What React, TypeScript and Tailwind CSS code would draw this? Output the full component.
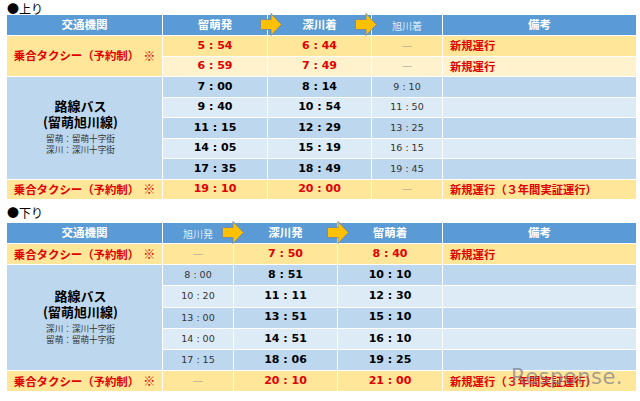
import React from 'react'

const hdr = 'bg-[#5b9bd5] flex items-center justify-center text-white font-bold text-[11.5px]'
const hdrLight = 'bg-[#5b9bd5] flex items-center justify-center text-[#e3ecf6] text-[10px]'
const num = "font-['DejaVu_Sans',sans-serif]"
const red = 'text-[#e00000]'

const Arrow = ({ left }: { left: number }) => (
  <svg
    className="absolute top-[-2px] w-[22px] h-[23px]"
    style={{ left }}
    viewBox="0 0 22 23"
  >
    <path
      d="M0.5 6.5 H11 V0.5 L21.5 11.5 L11 22.5 V16.5 H0.5 Z"
      fill="#ffc000"
      stroke="#7d8c9c"
      strokeWidth="1"
    />
  </svg>
)

const TaxiLabel = ({ span }: { span: string }) => (
  <div className={`${span} bg-[#ffe699] flex items-center justify-center ${red} font-bold text-[11.4px]`}>
    乗合タクシー（予約制）<span className="ml-[4px] text-[12px]">※</span>
  </div>
)

const BusLabel = ({ lines }: { lines: string[] }) => (
  <div className="row-span-5 bg-[#bdd7ee] flex flex-col items-center justify-center pr-[8px] pb-[2px] text-center">
    <div className="font-bold text-[13px] leading-[16px]">
      路線バス
      <br />
      (留萌旭川線)
    </div>
    <div className="mt-[3px] text-[8.6px] leading-[11px] text-[#333]">
      {lines[0]}
      <br />
      {lines[1]}
    </div>
  </div>
)

const up = [
  ['7 : 00', '8 : 14', '9 : 10'],
  ['9 : 40', '10 : 54', '11 : 50'],
  ['11 : 15', '12 : 29', '13 : 25'],
  ['14 : 05', '15 : 19', '16 : 15'],
  ['17 : 35', '18 : 49', '19 : 45'],
]

const down = [
  ['8 : 00', '8 : 51', '10 : 10'],
  ['10 : 20', '11 : 11', '12 : 30'],
  ['13 : 00', '13 : 51', '15 : 10'],
  ['14 : 00', '14 : 51', '16 : 10'],
  ['17 : 15', '18 : 06', '19 : 25'],
]

const busBg = (i: number) => (i % 2 === 0 ? 'bg-[#bdd7ee]' : 'bg-[#ddebf7]')
const cell = 'flex items-center justify-center'

export default function App() {
  return (
    <div className="w-[640px] h-[401px] overflow-hidden relative bg-white px-[7px] font-['Noto_Sans_CJK_JP',sans-serif] text-black">
      <div className="h-[15px] flex items-center text-[12px] leading-none pt-[2px]">●上り</div>
      <div className="relative">
        <div className="grid grid-cols-[155px_104px_103px_70px_193px] grid-rows-[20px_repeat(8,19.5px)] gap-px">
          <div className={hdr}>交通機関</div>
          <div className={hdr}>留萌発</div>
          <div className={hdr}>深川着</div>
          <div className={hdrLight}>旭川着</div>
          <div className={hdr}>備考</div>

          <TaxiLabel span="row-span-2" />
          {[
            ['5 : 54', '6 : 44'],
            ['6 : 59', '7 : 49'],
          ].map(([a, b], i) => {
            const bg = i === 0 ? 'bg-[#ffe699]' : 'bg-[#fff2cc]'
            return (
              <React.Fragment key={a}>
                <div className={`${bg} ${cell} ${num} ${red} font-bold text-[11px]`}>{a}</div>
                <div className={`${bg} ${cell} ${num} ${red} font-bold text-[11px]`}>{b}</div>
                <div className={`${bg} ${cell} text-[#999] text-[11px]`}>―</div>
                <div className={`${bg} flex items-center pl-[7px] ${red} font-bold text-[11.3px]`}>新規運行</div>
              </React.Fragment>
            )
          })}

          <BusLabel lines={['留萌：留萌十字街', '深川：深川十字街']} />
          {up.map(([a, b, c], i) => (
            <React.Fragment key={a}>
              <div className={`${busBg(i)} ${cell} ${num} font-bold text-[11px]`}>{a}</div>
              <div className={`${busBg(i)} ${cell} ${num} font-bold text-[11px]`}>{b}</div>
              <div className={`${busBg(i)} ${cell} ${num} text-[#333] text-[9.5px]`}>{c}</div>
              <div className={busBg(i)} />
            </React.Fragment>
          ))}

          <TaxiLabel span="" />
          <div className={`bg-[#ffe699] ${cell} ${num} ${red} font-bold text-[11px]`}>19 : 10</div>
          <div className={`bg-[#ffe699] ${cell} ${num} ${red} font-bold text-[11px]`}>20 : 00</div>
          <div className={`bg-[#ffe699] ${cell} text-[#999] text-[11px]`}>―</div>
          <div className={`bg-[#ffe699] flex items-center pl-[7px] ${red} font-bold text-[11.3px]`}>
            新規運行（３年間実証運行）
          </div>
        </div>
        <Arrow left={253} />
        <Arrow left={348} />
      </div>

      <div className="h-[24px] flex items-center text-[12px] leading-none pt-[3px]">●下り</div>
      <div className="relative">
        <div className="grid grid-cols-[155px_70px_103px_104px_193px] grid-rows-[20px_repeat(7,20.2px)] gap-px">
          <div className={hdr}>交通機関</div>
          <div className={hdrLight}>旭川発</div>
          <div className={hdr}>深川発</div>
          <div className={hdr}>留萌着</div>
          <div className={hdr}>備考</div>

          <TaxiLabel span="" />
          <div className={`bg-[#ffe699] ${cell} text-[#999] text-[11px]`}>―</div>
          <div className={`bg-[#ffe699] ${cell} ${num} ${red} font-bold text-[11px]`}>7 : 50</div>
          <div className={`bg-[#ffe699] ${cell} ${num} ${red} font-bold text-[11px]`}>8 : 40</div>
          <div className={`bg-[#ffe699] flex items-center pl-[7px] ${red} font-bold text-[11.3px]`}>新規運行</div>

          <BusLabel lines={['深川：深川十字街', '留萌：留萌十字街']} />
          {down.map(([a, b, c], i) => (
            <React.Fragment key={a}>
              <div className={`${busBg(i)} ${cell} ${num} text-[#333] text-[9.5px]`}>{a}</div>
              <div className={`${busBg(i)} ${cell} ${num} font-bold text-[11px]`}>{b}</div>
              <div className={`${busBg(i)} ${cell} ${num} font-bold text-[11px]`}>{c}</div>
              <div className={busBg(i)} />
            </React.Fragment>
          ))}

          <TaxiLabel span="" />
          <div className={`bg-[#ffe699] ${cell} text-[#999] text-[11px]`}>―</div>
          <div className={`bg-[#ffe699] ${cell} ${num} ${red} font-bold text-[11px]`}>20 : 10</div>
          <div className={`bg-[#ffe699] ${cell} ${num} ${red} font-bold text-[11px]`}>21 : 00</div>
          <div className={`bg-[#ffe699] flex items-center pl-[7px] ${red} font-bold text-[11.3px]`}>
            新規運行（３年間実証運行）
          </div>
        </div>
        <Arrow left={215} />
        <Arrow left={320} />
      </div>

      <div className="absolute left-[511px] top-[367px] text-[21px] leading-none text-[#7c7c8c]/70 font-['DejaVu_Sans',sans-serif] tracking-[0.5px]">
        Response.
      </div>
    </div>
  )
}
